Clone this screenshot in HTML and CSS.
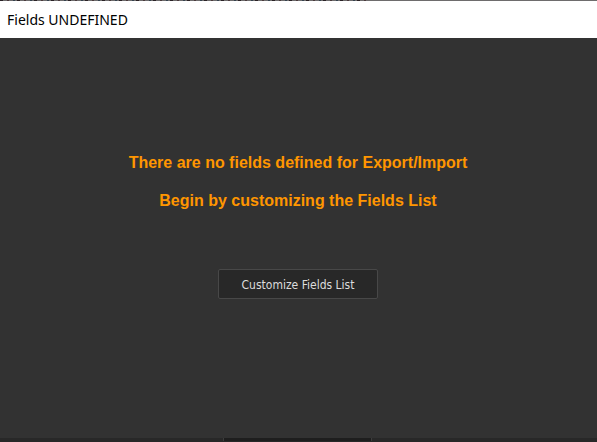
FILE: index.html
```html
<!DOCTYPE html>
<html lang="en">
<head>
<meta charset="utf-8">
<title>Fields UNDEFINED</title>
<link rel="stylesheet" href="styles.css">
</head>
<body>
<div class="window">
  <div class="backdrop"></div>
  <header class="titlebar">
    <h1 class="title">Fields UNDEFINED</h1>
  </header>
  <main class="content">
    <p class="message">There are no fields defined for Export/Import</p>
    <p class="message">Begin by customizing the Fields List</p>
    <button class="button" type="button">Customize Fields List</button>
  </main>
  <footer class="footer">
    <div class="slot"></div>
  </footer>
</div>
</body>
</html>
```

FILE: styles.css
```css
* {
  box-sizing: border-box;
}

body {
  margin: 0;
  background: #323232;
}

.window {
  display: flex;
  flex-direction: column;
  min-height: 100vh;
}

/* Sliver of the window behind, with the feet of its text line */
.backdrop {
  height: 1px;
  background:
    repeating-linear-gradient(90deg, #2a2226 0 3px, #6e6c6d 3px 7px, #4a3a3c 7px 9px, #6e6c6d 9px 13px, #34424e 13px 15px, #6e6c6d 15px 17px) 0 0 / 62% 100% no-repeat,
    #6e6c6d;
}

.titlebar {
  padding: 9px 7px 8px;
  background: #fff;
}

.title {
  margin: 0;
  color: #000;
  font: 400 14px/20px "Noto Sans", sans-serif;
}

.content {
  flex: 1;
  display: flex;
  flex-direction: column;
  align-items: center;
  padding: 115px 1px 0 0;
}

.message {
  margin: 0 0 18px;
  color: #ff9600;
  font: 700 16px/20px "Liberation Sans", Arial, sans-serif;
}

.button {
  min-width: 160px;
  height: 30px;
  margin-top: 40px;
  padding: 2px 16px 0;
  border: 1px solid #484848;
  border-radius: 2px;
  background: #282828;
  color: #dcdcdc;
  font: 400 12px/16px "DejaVu Sans Condensed", "DejaVu Sans", sans-serif;
}

.footer {
  display: grid;
  grid-template-columns: 3fr 2fr 3fr;
  height: 4px;
  padding-right: 2px;
  background: #282828;
}

.slot {
  grid-column: 2;
  height: 3px;
  border: solid #3c3c3c;
  border-width: 0 1px;
  background: #1e1e1e;
}
```
